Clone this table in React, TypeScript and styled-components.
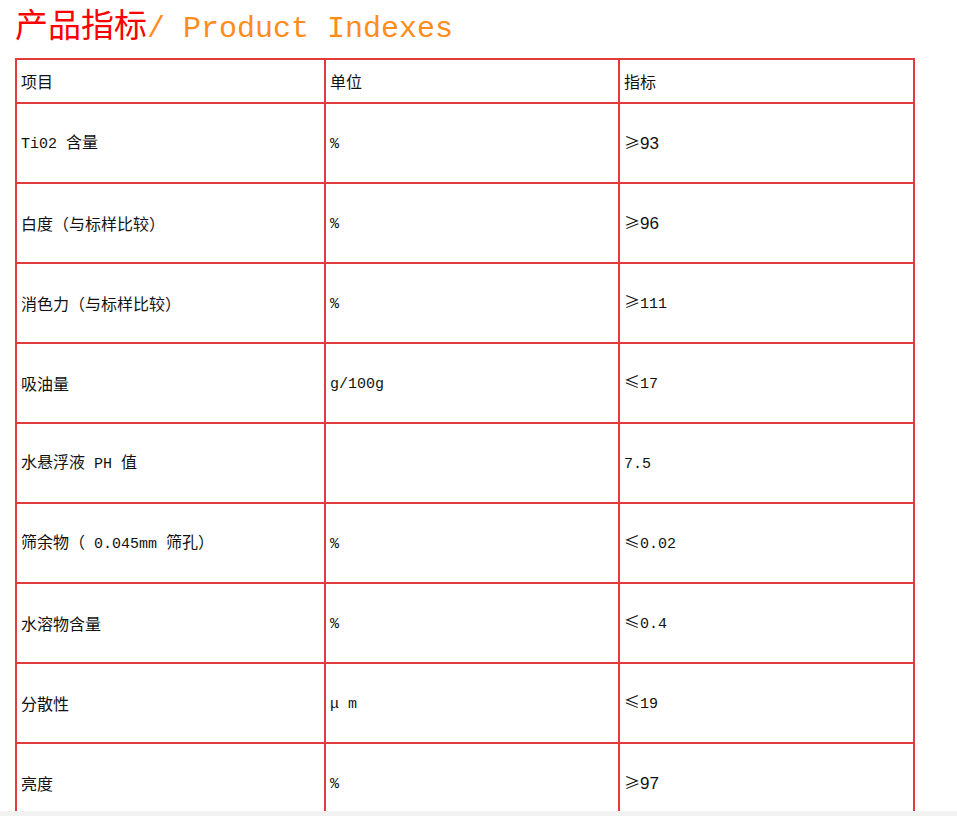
import React from "react";
import styled, { createGlobalStyle } from "styled-components";

const Global = createGlobalStyle`
  html, body { margin: 0; padding: 0; background: #fff; }
  body { font-family: "Liberation Serif", "Noto Sans CJK SC", serif; color: #111; }
`;

const Page = styled.div`
  padding: 0 0 0 15px;
`;

const Title = styled.h1`
  margin: 0;
  height: 58px;
  padding-top: 0;
  box-sizing: border-box;
  font-weight: normal;
  font-size: 30px;
  line-height: 46px;
  white-space: nowrap;
`;

const TitleCn = styled.span`
  color: #ff0000;
  font-family: "Noto Sans CJK SC", sans-serif;
  font-size: 33px;
`;

const TitleEn = styled.span`
  color: #ff8c1a;
  font-family: "Liberation Mono", monospace;
  font-size: 30px;
`;

const Table = styled.table`
  border-collapse: collapse;
  width: 898px;
  table-layout: fixed;
  font-size: 16px;
`;

const Cell = styled.td<{ $head?: boolean }>`
  border: 2px solid #e33b3b;
  height: ${(p) => (p.$head ? "44px" : "80px")};
  padding: 0 0 0 4px;
  vertical-align: middle;
  font-family: "Noto Sans CJK SC", sans-serif;
  font-size: 16px;
  line-height: 20px;
  white-space: nowrap;
  box-sizing: border-box;
`;

const Lat = styled.span<{ $sans?: boolean }>`
  font-family: ${(p) =>
    p.$sans ? `"Liberation Sans", sans-serif` : `"Liberation Mono", monospace`};
  font-size: ${(p) => (p.$sans ? "17px" : "15px")};
`;

const Sym = styled.span`
  font-family: "Noto Sans CJK SC", sans-serif;
  font-size: 16px;
`;

const Bottom = styled.div`
  position: fixed;
  left: 0;
  right: 0;
  bottom: 0;
  height: 5px;
  background: #f2f2f2;
`;

type Row = { name: React.ReactNode; unit: React.ReactNode; value: React.ReactNode };

const rows: Row[] = [
  { name: <><Lat>Ti02 </Lat>含量</>, unit: <Lat>%</Lat>, value: <><Sym>≥</Sym><Lat $sans>93</Lat></> },
  { name: "白度（与标样比较）", unit: <Lat>%</Lat>, value: <><Sym>≥</Sym><Lat $sans>96</Lat></> },
  { name: "消色力（与标样比较）", unit: <Lat>%</Lat>, value: <><Sym>≥</Sym><Lat>111</Lat></> },
  { name: "吸油量", unit: <Lat>g/100g</Lat>, value: <><Sym>≤</Sym><Lat>17</Lat></> },
  { name: <>水悬浮液<Lat> PH </Lat>值</>, unit: "", value: <Lat>7.5</Lat> },
  { name: <>筛余物（<Lat> 0.045mm </Lat>筛孔）</>, unit: <Lat>%</Lat>, value: <><Sym>≤</Sym><Lat>0.02</Lat></> },
  { name: "水溶物含量", unit: <Lat>%</Lat>, value: <><Sym>≤</Sym><Lat>0.4</Lat></> },
  { name: "分散性", unit: <Lat> μ m</Lat>, value: <><Sym>≤</Sym><Lat>19</Lat></> },
  { name: "亮度", unit: <Lat>%</Lat>, value: <><Sym>≥</Sym><Lat $sans>97</Lat></> },
];

export default function App() {
  return (
    <>
      <Global />
      <Page>
        <Title>
          <TitleCn>产品指标</TitleCn>
          <TitleEn>/ Product Indexes</TitleEn>
        </Title>
        <Table>
          <colgroup>
            <col style={{ width: 309 }} />
            <col style={{ width: 294 }} />
            <col style={{ width: 295 }} />
          </colgroup>
          <tbody>
            <tr>
              <Cell $head>项目</Cell>
              <Cell $head>单位</Cell>
              <Cell $head>指标</Cell>
            </tr>
            {rows.map((r, i) => (
              <tr key={i}>
                <Cell>{r.name}</Cell>
                <Cell>{r.unit}</Cell>
                <Cell>{r.value}</Cell>
              </tr>
            ))}
          </tbody>
        </Table>
      </Page>
      <Bottom />
    </>
  );
}
